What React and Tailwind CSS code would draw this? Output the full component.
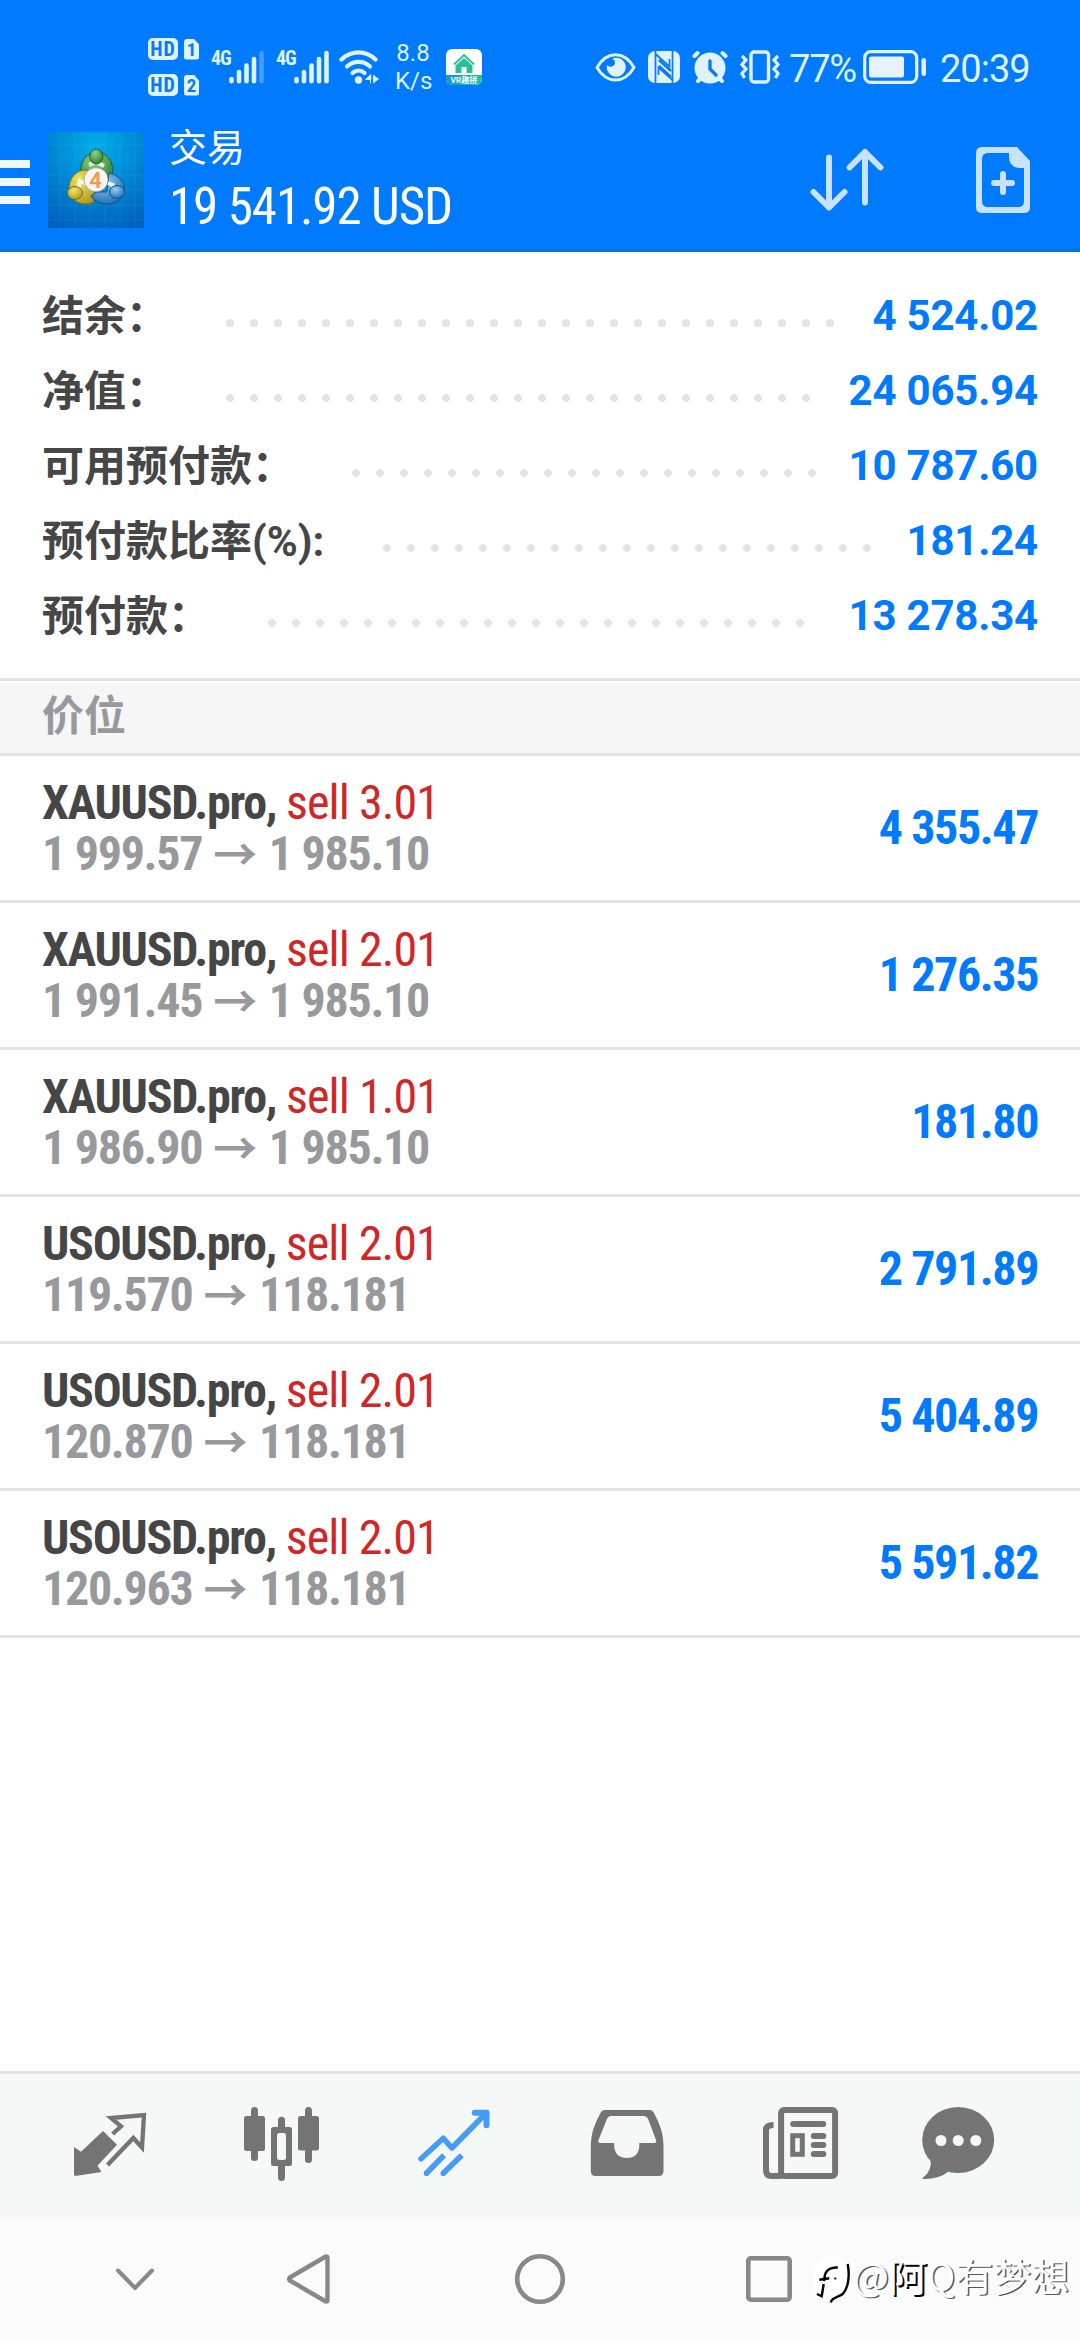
const summary = [
  { label: '结余：', value: '4 524.02', labelCls: 'w-[176px]', dotsCls: 'w-[624px]' },
  { label: '净值：', value: '24 065.94', labelCls: 'w-[176px]', dotsCls: 'w-[600px]' },
  { label: '可用预付款：', value: '10 787.60', labelCls: 'w-[302px]', dotsCls: 'w-[480px]' },
  { label: '预付款比率(%):', value: '181.24', labelCls: 'w-[333px]', dotsCls: 'w-[504px]' },
  { label: '预付款：', value: '13 278.34', labelCls: 'w-[218px]', dotsCls: 'w-[552px]' },
];

const positions = [
  { symbol: 'XAUUSD.pro', side: 'sell 3.01', open: '1 999.57', price: '1 985.10', profit: '4 355.47' },
  { symbol: 'XAUUSD.pro', side: 'sell 2.01', open: '1 991.45', price: '1 985.10', profit: '1 276.35' },
  { symbol: 'XAUUSD.pro', side: 'sell 1.01', open: '1 986.90', price: '1 985.10', profit: '181.80' },
  { symbol: 'USOUSD.pro', side: 'sell 2.01', open: '119.570', price: '118.181', profit: '2 791.89' },
  { symbol: 'USOUSD.pro', side: 'sell 2.01', open: '120.870', price: '118.181', profit: '5 404.89' },
  { symbol: 'USOUSD.pro', side: 'sell 2.01', open: '120.963', price: '118.181', profit: '5 591.82' },
];

function HdBadge({ sim }) {
  return (
    <div className="flex h-[22px] items-center gap-[6px] font-['Roboto_Condensed',sans-serif] font-bold text-[#0f78f0]">
      <span className="flex h-[22px] w-[30px] items-center justify-center rounded-[5px] bg-[#dff3ff] text-[20px] leading-none tracking-[1px]">HD</span>
      <span className="flex h-[21px] w-[15px] items-center justify-center rounded-[3px] bg-[#dff3ff] text-[19px] leading-none [clip-path:polygon(0_0,65%_0,100%_28%,100%_100%,0_100%)]">{sim}</span>
    </div>
  );
}

function Signal({ weak }) {
  return (
    <div className="ml-3 flex h-[34px] items-start">
      <span className="w-[18px] font-['Roboto_Condensed',sans-serif] text-[20px] font-bold leading-[17px] tracking-[-1px]">4G</span>
      <svg className="h-[34px] w-[35px]" viewBox="0 0 35 34" stroke="currentColor" strokeWidth="4.6" strokeLinecap="round">
        <path d="M2.5 29v2.2M10 22v9.2M17.5 15.5v15.7M25 9v22.2" />
        <path d="M32.5 3v28.2" opacity={weak ? 0.3 : 1} />
      </svg>
    </div>
  );
}

function WifiIcon() {
  return (
    <svg className="ml-[10px] h-[34px] w-[41px]" viewBox="0 0 41 34" fill="none" stroke="currentColor" strokeWidth="4.2" strokeLinecap="round">
      <path d="M2.5 9.5C12 0 27 0 36.5 9.5" />
      <path d="M8 16.5c6.500-6.300 16.500-6.300 23 0" />
      <path d="M13.5 23c3.500-3.300 8.500-3.300 12 0" />
      <circle cx="19.5" cy="30" r="3.7" fill="currentColor" stroke="none" />
      <path d="M31.5 25v8M31.5 25l-5 4.500h5zM35 25v8M35 26l4.500 3-4.500 3z" fill="currentColor" strokeWidth="1" />
    </svg>
  );
}

function VrAppIcon() {
  return (
    <div className="ml-[15px] flex h-9 w-9 flex-col overflow-hidden rounded-[6px] bg-white">
      <svg className="h-[26px] w-9" viewBox="0 0 36 26" fill="#27bf96">
        <path d="M18 9l8.500 7.500V24h-6v-6h-5v6h-6v-7.500z" />
        <path d="M8 15.500L18 6l10 9.500" fill="none" stroke="#27bf96" strokeWidth="1.8" />
      </svg>
      <span className="flex h-[10px] items-center justify-center bg-gradient-to-r from-[#1595c9] to-[#1fc7a0] font-['Noto_Sans_CJK_SC',sans-serif] text-[8px] font-bold leading-none text-white">VR趣拼</span>
    </div>
  );
}

function StatusBar() {
  return (
    <div className="flex h-[114px] items-center pt-5 pl-[148px] pr-[50px] text-[#dff3ff]">
      <div className="flex flex-col gap-[14px]">
        <HdBadge sim="1" />
        <HdBadge sim="2" />
      </div>
      <Signal weak />
      <Signal />
      <WifiIcon />
      <div className="ml-[15px] w-9 text-center text-[24px] leading-[28px]">
        <div>8.8</div>
        <div>K/s</div>
      </div>
      <VrAppIcon />

      <div className="ml-auto flex items-center">
        <svg className="h-[34px] w-[41px]" viewBox="0 0 41 34" fill="none" stroke="currentColor" strokeWidth="3">
          <path d="M2 17.500C7 9 13.500 4.800 20.500 4.800S34 9 39 17.500C34 26 27.500 30 20.500 30S7 26 2 17.500z" strokeLinejoin="round" />
          <path d="M17 8.700a9.500 9.500 0 1 1-5 6.300 4.500 4.500 0 0 0 8-2.500c0-1.800-1.300-3.300-3-3.800z" fill="currentColor" stroke="none" />
        </svg>
        <svg className="ml-3 h-[32px] w-[32px]" viewBox="0 0 32 32">
          <rect width="32" height="32" rx="7" fill="currentColor" />
          <path d="M7.500 0v32M7.500 3l14 12.500V8M24.500 32V0M24.500 29l-14-12.500V24" stroke="#0a7bf8" strokeWidth="1.7" fill="none" />
          <path d="M11 9l12 11M11 15l12 11" stroke="#0a7bf8" strokeWidth="2.4" />
        </svg>
        <svg className="ml-3 h-[34px] w-[36px]" viewBox="0 0 36 34">
          <g stroke="currentColor" strokeWidth="4" strokeLinecap="round">
            <path d="M2.500 6L5.500 3M33.500 6l-3-3M6 31l4-4M30 31l-4-4" />
          </g>
          <circle cx="18" cy="18" r="15.5" fill="currentColor" />
          <path d="M18 11v8l6 6" fill="none" stroke="#0a7bf8" strokeWidth="3.4" strokeLinecap="round" strokeLinejoin="round" />
        </svg>
        <svg className="ml-3 h-[34px] w-[40px]" viewBox="0 0 40 34" fill="none" stroke="currentColor">
          <rect x="11" y="2" width="17.5" height="30" rx="3" strokeWidth="3.4" />
          <path d="M2 6l4 4-4 4.500L6 19l-4 4.500L4.500 28M38 6l-4 4 4 4.500L34 19l4 4.500-2.500 4.500" strokeWidth="3.2" />
        </svg>
        <span className="ml-[9px] mt-[3px] w-[67px] text-[38px] font-[370] leading-none tracking-[-1.2px]">77%</span>
        <svg className="ml-[7px] h-[34px] w-[64px]" viewBox="0 0 64 34" fill="none">
          <rect x="1.7" y="1.7" width="52" height="30.6" rx="6" stroke="currentColor" strokeWidth="3.2" />
          <rect x="6" y="6.5" width="35" height="21" rx="2" fill="#e6f2ff" />
          <rect x="58.5" y="8" width="4.5" height="18" rx="2.2" fill="currentColor" />
        </svg>
        <span className="ml-[13px] mt-[3px] w-[90px] text-[38px] font-[370] leading-none tracking-[-1px]">20:39</span>
      </div>
    </div>
  );
}

function AppLogo() {
  return (
    <svg className="ml-[18px] h-24 w-24" viewBox="0 0 96 96">
      <defs>
        <radialGradient id="sky" cx="0.5" cy="0.15" r="0.9">
          <stop offset="0" stopColor="#00adea" />
          <stop offset="1" stopColor="#0062bd" />
        </radialGradient>
        <radialGradient id="green" cx="0.4" cy="0.3" r="0.8">
          <stop offset="0" stopColor="#8fd183" />
          <stop offset="1" stopColor="#1f7a2c" />
        </radialGradient>
        <radialGradient id="yellow" cx="0.4" cy="0.3" r="0.8">
          <stop offset="0" stopColor="#f3e767" />
          <stop offset="1" stopColor="#a8941a" />
        </radialGradient>
        <radialGradient id="blue" cx="0.4" cy="0.3" r="0.8">
          <stop offset="0" stopColor="#8fd0f5" />
          <stop offset="1" stopColor="#1565ae" />
        </radialGradient>
      </defs>
      <rect width="96" height="96" fill="url(#sky)" />
      <path d="M12 0v96M27 0v96M42 0v96M57 0v96M72 0v96M87 0v96M0 13h96M0 28h96M0 43h96M0 58h96M0 73h96M0 88h96" stroke="#fff" strokeWidth="0.8" opacity="0.08" />
      <path d="M33 42c-2-11 5-22 16-22 13 0 19 15 14 27l-6 5-9-15z" fill="url(#green)" stroke="#1c5f33" />
      <path d="M40 38c-13-1-20 10-19 21 2 12 17 16 25 11l1-10-8-7z" fill="url(#yellow)" stroke="#75701c" />
      <path d="M61 41c11 2 18 12 14 21-4 12-24 14-32 2l5-4h11z" fill="url(#blue)" stroke="#124f8c" />
      <path d="M41 33l7-3 8 4M30 58l2-9 7 3M60 51l5 2v7" fill="none" stroke="#eef7e0" strokeWidth="4" />
      <ellipse cx="48.3" cy="24.5" rx="6.6" ry="7.5" fill="url(#green)" stroke="#1c5f33" />
      <ellipse cx="27" cy="61" rx="7.5" ry="6.5" fill="url(#yellow)" stroke="#75701c" />
      <ellipse cx="69" cy="60" rx="7.5" ry="6.5" fill="url(#blue)" stroke="#124f8c" />
      <circle cx="48" cy="47.7" r="12" fill="#f8f6f4" stroke="#9a9a8c" strokeWidth="0.7" />
      <text x="47.5" y="55.5" textAnchor="middle" fontFamily="Roboto, sans-serif" fontSize="22" fontWeight="600" fill="#f29a45">4</text>
    </svg>
  );
}

function Header() {
  return (
    <header className="h-[252px] border-b-[3px] border-[#0b6fdd] bg-[#007aff]">
      <StatusBar />
      <div className="flex h-[135px] items-center pb-[3px] pr-[50px]">
        <div className="mt-1 flex w-[30px] flex-col gap-[10px]">
          <span className="h-2 bg-[#eef7ff]" />
          <span className="h-2 bg-[#eef7ff]" />
          <span className="h-2 bg-[#eef7ff]" />
        </div>
        <AppLogo />
        <div className="ml-[25px] mb-[3px] text-white">
          <div className="font-['Noto_Sans_CJK_SC',sans-serif] text-[38px] leading-[56px]">交易</div>
          <div className="font-['Roboto_Condensed',sans-serif] text-[51px] leading-[68px] tracking-[-1.1px]">19 541.92 USD</div>
        </div>
        <svg className="ml-auto h-[64px] w-[74px]" viewBox="0 0 74 64" fill="none" stroke="#c8e2ff" strokeWidth="6" strokeLinecap="round" strokeLinejoin="round">
          <path d="M19 9.500v50M3.500 44L19 59.500 34.500 44" />
          <path d="M55 54.500V4M39.500 19.500L55 4l15.500 15.500" />
        </svg>
        <svg className="ml-[92px] h-[66px] w-[54px]" viewBox="0 0 54 66">
          <path d="M6 0h35l13 14v46q0 6-6 6H6q-6 0-6-6V6q0-6 6-6zM12 6Q6 6 6 12v42q0 6 6 6h30q6 0 6-6V21h-5q-10-1-10-11V6z" fill="#c8e2ff" fillRule="evenodd" />
          <path d="M27 27v18M18 36h18" stroke="#c8e2ff" strokeWidth="6" strokeLinecap="round" />
        </svg>
      </div>
    </header>
  );
}

function SummaryRow({ label, value, labelCls, dotsCls }) {
  return (
    <div className="flex h-[75px] items-center">
      <span className={`${labelCls} whitespace-nowrap font-['Roboto','Noto_Sans_CJK_SC',sans-serif] text-[42px] font-bold leading-none text-[#464646]`}>{label}</span>
      <span className={`${dotsCls} mt-[13px] h-2 bg-[radial-gradient(circle,#e3e3e3_3.5px,transparent_4.2px)] bg-[length:24px_8px]`} />
      <span className="mb-[2px] ml-auto whitespace-nowrap text-[42px] font-bold leading-none tracking-[-0.2px] text-[#007aff]">{value}</span>
    </div>
  );
}

function PositionRow({ symbol, side, open, price, profit }) {
  return (
    <div className="flex h-[147px] items-center justify-between border-b-[3px] border-[#e3e3e3] px-[42px] font-['Roboto_Condensed',sans-serif] text-[48px] font-bold leading-[51px]">
      <div className="whitespace-nowrap">
        <div className="tracking-[-1.3px] text-[#464646]">
          {symbol}, <span className="font-normal tracking-[-0.9px] text-[#d22626]">{side}</span>
        </div>
        <div className="flex tracking-[-1.3px] text-[#98999d]">
          {open}
          <span className="ml-[11px] mr-[13px] h-[51px] font-['Noto_Sans_CJK_SC',sans-serif] text-[44px] leading-[49px]">→</span>
          {price}
        </div>
      </div>
      <span className="mb-[1px] tracking-[-1.4px] text-[#007aff]">{profit}</span>
    </div>
  );
}

function TabBar() {
  const cls = 'h-[144px] w-[172px]';
  return (
    <nav className="flex h-[147px] border-t-[3px] border-[#e3e3e3] bg-[#f6f7f7] px-6 text-[#747474]">
      <svg className={cls} viewBox="24 2074 172 144">
        <path d="M74 2147l7 4.700L103 2131l14 13.700-19.500 21 4 6.300-26 4q-1.500 0-1.500-2z" fill="currentColor" />
        <path d="M112.600 2134l8.400-7.700-10-8.300 33-3-2 32.500-8.700-9.500-25.800 27" fill="none" stroke="currentColor" strokeWidth="4.3" />
      </svg>
      <svg className={cls} viewBox="196 2074 172 144" fill="currentColor">
        <rect x="251" y="2107" width="7" height="54" rx="3.5" />
        <rect x="244" y="2116" width="21" height="35" rx="2.5" />
        <rect x="305" y="2107" width="7" height="56" rx="3.5" />
        <rect x="298" y="2116" width="21" height="34.5" rx="2.5" />
        <rect x="278" y="2116.7" width="7" height="64.3" rx="3.5" />
        <rect x="271" y="2127" width="21" height="39" rx="2.5" />
        <rect x="277" y="2133" width="9" height="27" rx="2.5" fill="#f6f7f7" />
      </svg>
      <svg className={cls} viewBox="367.5 2074 172 144" fill="none" stroke="#459bf8" strokeWidth="5.6">
        <path d="M420.500 2158.700l22.300-20.400 8.600 9.700 34.600-35.300" strokeLinecap="round" strokeLinejoin="round" />
        <path d="M474.200 2112.700H486v12.600" strokeWidth="6" strokeLinecap="round" strokeLinejoin="round" />
        <path d="M426 2173.300l17.500-18M442.800 2173.300l18.500-18" />
        <path d="M426 2173.300h.01M442.800 2173.300h.01" strokeLinecap="round" />
      </svg>
      <svg className={cls} viewBox="539.5 2074 172 144" fill="currentColor">
        <path
          fillRule="evenodd"
          d="M604.500 2110h45q2.500 0 4 3 9.500 17 9.500 32v26q0 5-5 5h-63q-4.700 0-4.700-5v-26q0-15 9.700-32 1.500-3 4.500-3zM611 2116q-3.500 0-5 4l-8 20q-1 3 2 3h13.700v3q.800 12 12.600 12t12.500-12v-3h14.700q3 0 2-3l-7.500-20q-1.500-4-5-4z"
        />
      </svg>
      <svg className={cls} viewBox="711.5 2074 172 144" fill="none" stroke="currentColor" strokeWidth="6">
        <rect x="780.6" y="2110" width="54" height="66" rx="3" />
        <path d="M773 2125q-7.500 0-7.500 5v40q0 6 5.500 6h10" />
        <path d="M792.700 2124h30M813.300 2136h9.500M813.300 2145h9.500M813.300 2154h9.500" strokeLinecap="round" />
        <rect x="792.2" y="2135.7" width="9.6" height="18.6" strokeWidth="5" />
      </svg>
      <svg className={cls} viewBox="883.5 2074 172 144" fill="currentColor">
        <ellipse cx="957.7" cy="2140" rx="36" ry="33" />
        <path d="M930 2158q2 13-7.500 19.500-1.500 1.500 1.500 1.500 15 0 24-7.500z" />
        <g fill="#f6f6f6">
          <circle cx="940.5" cy="2140.5" r="5.5" />
          <circle cx="957.7" cy="2140.5" r="5.5" />
          <circle cx="975.3" cy="2140.5" r="5.5" />
        </g>
      </svg>
    </nav>
  );
}

function SystemNav() {
  return (
    <div className="flex h-[122px] items-center bg-[#fbfbfb] pl-[115px] text-[#888]">
      <svg className="h-6 w-10" viewBox="0 0 40 24" fill="none" stroke="currentColor" strokeWidth="4" strokeLinecap="round" strokeLinejoin="round">
        <path d="M3 3.500l17 17.500 17-17.500" />
      </svg>
      <svg className="ml-[131px] h-[52px] w-[46px]" viewBox="0 0 46 52" fill="none" stroke="currentColor" strokeWidth="4.4" strokeLinejoin="round">
        <path d="M3.800 24.500q-1.300 1.500 0 3l36 21q1.700.5 1.700-1.500V5q0-2-1.700-1.500z" />
      </svg>
      <svg className="ml-[182px] h-[52px] w-[52px]" viewBox="0 0 52 52" fill="none" stroke="currentColor" strokeWidth="4.6">
        <circle cx="26" cy="26" r="22.8" />
      </svg>
      <svg className="ml-[180px] h-[46px] w-[46px]" viewBox="0 0 46 46" fill="none" stroke="currentColor" strokeWidth="4.6">
        <rect x="2.3" y="2.3" width="41.4" height="41.4" rx="2.5" />
      </svg>
      <svg className="ml-[18px] h-[50px] w-[42px]" viewBox="0 0 42 50" fill="none">
        <path d="M14 3h14q10 2 10 14v12q-2 10-14 14-14 4-21-4L4 12z" fill="#fff" />
        <path d="M14.300 27c-.3-9 4-14 13.500-13.500M9.300 25.700l10-1.400M13.700 30l-2 12.300L7 40" stroke="#000" strokeWidth="2.4" />
        <path d="M37.700 10c2.500 13 0 25-5 30-5 4-10 2-12 8.500" stroke="#000" strokeWidth="2.4" />
        <path d="M24.300 24.500h2" stroke="#000" strokeWidth="1.8" />
      </svg>
      <span className="mb-[9px] ml-[1px] whitespace-nowrap font-['Noto_Sans_CJK_SC',sans-serif] text-[38px] font-normal leading-none text-white [text-shadow:1.5px_1.3px_0px_#555]">
        @<span className="[text-shadow:2px_1.5px_0px_#000]">阿</span>Q有梦想
      </span>
    </div>
  );
}

export default function App() {
  return (
    <div className="flex h-[2340px] w-[1080px] flex-col overflow-hidden bg-white font-['Roboto','Noto_Sans_CJK_SC',sans-serif]">
      <Header />
      <section className="h-[429px] border-b-[3px] border-[#e3e3e3] px-[42px] pt-[27px]">
        {summary.map((row) => (
          <SummaryRow key={row.label} {...row} />
        ))}
      </section>
      <div className="mt-[3px] flex h-[72px] items-center border-b-[3px] border-[#e3e3e3] bg-[#f6f6f6] px-[42px] pb-[11px]">
        <span className="font-['Noto_Sans_CJK_SC',sans-serif] text-[42px] font-bold leading-none text-[#98999d]">价位</span>
      </div>
      <main className="flex-1">
        {positions.map((p) => (
          <PositionRow key={p.open} {...p} />
        ))}
      </main>
      <TabBar />
      <SystemNav />
    </div>
  );
}
